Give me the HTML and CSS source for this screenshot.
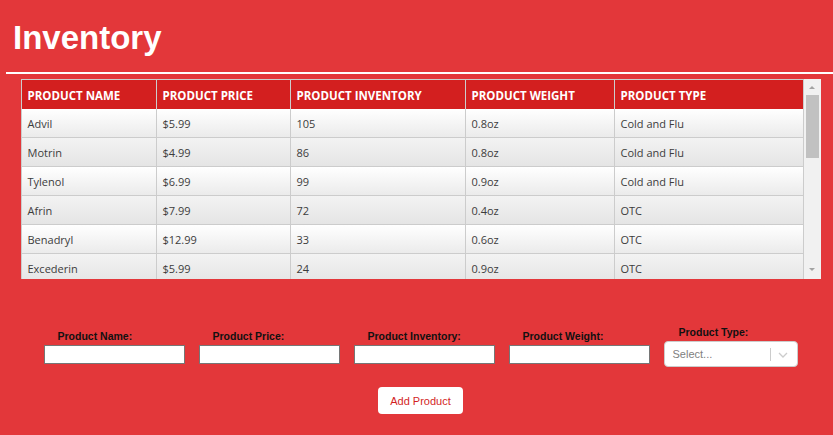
FILE: index.html
```html
<!DOCTYPE html>
<html lang="en">
<head>
<meta charset="utf-8">
<title>Inventory</title>
<link rel="stylesheet" href="styles.css">
</head>
<body>
  <header class="page-header">
    <h1 class="title">Inventory</h1>
  </header>
  <hr class="rule">
  <main class="main">
    <div class="grid-wrap">
      <div class="grid">
        <div class="row head">
          <div class="cell">PRODUCT NAME</div>
          <div class="cell">PRODUCT PRICE</div>
          <div class="cell">PRODUCT INVENTORY</div>
          <div class="cell">PRODUCT WEIGHT</div>
          <div class="cell">PRODUCT TYPE</div>
        </div>
        <div class="row odd">
          <div class="cell">Advil</div><div class="cell">$5.99</div><div class="cell">105</div><div class="cell">0.8oz</div><div class="cell">Cold and Flu</div>
        </div>
        <div class="row even">
          <div class="cell">Motrin</div><div class="cell">$4.99</div><div class="cell">86</div><div class="cell">0.8oz</div><div class="cell">Cold and Flu</div>
        </div>
        <div class="row odd">
          <div class="cell">Tylenol</div><div class="cell">$6.99</div><div class="cell">99</div><div class="cell">0.9oz</div><div class="cell">Cold and Flu</div>
        </div>
        <div class="row even">
          <div class="cell">Afrin</div><div class="cell">$7.99</div><div class="cell">72</div><div class="cell">0.4oz</div><div class="cell">OTC</div>
        </div>
        <div class="row odd">
          <div class="cell">Benadryl</div><div class="cell">$12.99</div><div class="cell">33</div><div class="cell">0.6oz</div><div class="cell">OTC</div>
        </div>
        <div class="row even">
          <div class="cell">Excederin</div><div class="cell">$5.99</div><div class="cell">24</div><div class="cell">0.9oz</div><div class="cell">OTC</div>
        </div>
      </div>
      <div class="scrollbar">
        <span class="arrow up"></span>
        <span class="thumb"></span>
        <span class="track-fill"></span>
        <span class="arrow down"></span>
      </div>
    </div>

    <form class="form">
      <div class="fields">
        <div class="field">
          <label class="label">Product Name:</label>
          <input class="input" type="text">
        </div>
        <div class="field">
          <label class="label">Product Price:</label>
          <input class="input" type="text">
        </div>
        <div class="field">
          <label class="label">Product Inventory:</label>
          <input class="input" type="text">
        </div>
        <div class="field">
          <label class="label">Product Weight:</label>
          <input class="input" type="text">
        </div>
        <div class="field">
          <label class="label">Product Type:</label>
          <div class="select">
            <span class="placeholder">Select...</span>
            <span class="sep"></span>
            <svg class="chev" width="10" height="6" viewBox="0 0 10 6"><path d="M1 1 L5 5 L9 1" fill="none" stroke="#cccccc" stroke-width="1.3"/></svg>
          </div>
        </div>
      </div>
      <button class="btn" type="button">Add Product</button>
    </form>
  </main>
</body>
</html>
```

FILE: styles.css
```css
* { box-sizing: border-box; }

html, body {
  margin: 0;
  padding: 0;
  background: #e3373a;
  height: 100%;
}

body {
  font-family: "Liberation Sans", Arial, sans-serif;
  overflow: hidden;
}

.page-header {
  padding: 21px 0 0 13px;
}

.title {
  margin: 0;
  font-family: "Liberation Sans", Arial, sans-serif;
  font-weight: bold;
  font-size: 33px;
  line-height: 33px;
  color: #ffffff;
}

.rule {
  margin: 18px 0 0 6px;
  border: 0;
  height: 2px;
  background: #ffffff;
}

.main {
  padding-left: 8px;
  display: flex;
  flex-direction: column;
  align-items: center;
}

.grid-wrap {
  margin-top: 5px;
  width: 800px;
  height: 200px;
  display: flex;
  overflow: hidden;
}

.grid {
  width: 783px;
  height: 200px;
  overflow: hidden;
  border-left: 1px solid #cccccc;
  border-top: 1px solid #cccccc;
  font-family: "Open Sans", "Noto Sans", sans-serif;
}

.row {
  display: grid;
  grid-template-columns: 135px 134px 175px 149px 189px;
  height: 29px;
  border-bottom: 1px solid #cccccc;
}

.row.head {
  background: #d31f1f;
  border-bottom: 0;
}

.row.odd { background: linear-gradient(to bottom, #ffffff, #ebebeb); }
.row.even { background: linear-gradient(to bottom, #f3f3f3, #e5e5e5); }

.cell {
  border-right: 1px solid #cccccc;
  padding-left: 6px;
  display: flex;
  align-items: center;
  font-size: 11px;
  color: #3c3c3c;
  white-space: nowrap;
}

.head .cell {
  color: #ffffff;
  font-weight: 700;
  font-size: 11.5px;
  padding-top: 1px;
}

.scrollbar {
  width: 17px;
  height: 200px;
  background: #f1f1f1;
  display: flex;
  flex-direction: column;
  align-items: center;
}

.arrow {
  width: 0;
  height: 0;
  border-left: 3.5px solid transparent;
  border-right: 3.5px solid transparent;
}

.arrow.up {
  margin-top: 7px;
  border-bottom: 3.5px solid #a3a3a3;
}

.thumb {
  margin-top: 6px;
  width: 13px;
  height: 63px;
  background: #c1c1c1;
}

.track-fill { flex: 1; }

.arrow.down {
  margin-bottom: 8px;
  border-top: 3.5px solid #a3a3a3;
}

.form {
  display: flex;
  flex-direction: column;
  align-items: center;
}

.fields {
  margin-top: 47px;
  display: flex;
  align-items: center;
  gap: 14px;
}

.field {
  display: flex;
  flex-direction: column;
}

.label {
  font-size: 10.5px;
  line-height: 13px;
  font-weight: bold;
  color: #111111;
  padding-left: 14px;
  margin-bottom: 2px;
}

.field:last-child .label {
  padding-left: 15px;
  margin-bottom: 2px;
}

.input {
  width: 141px;
  height: 19px;
  margin: 0;
  border: 1px solid #767676;
  background: #ffffff;
  padding: 0 3px;
  font-size: 11px;
}

.select {
  width: 134px;
  height: 26px;
  background: #ffffff;
  border: 1px solid #cccccc;
  border-radius: 4px;
  display: flex;
  align-items: center;
  padding-left: 8px;
}

.placeholder {
  flex: 1;
  font-size: 11px;
  color: #808080;
}

.sep {
  width: 1px;
  height: 13px;
  background: #cccccc;
}

.chev {
  margin: 1px 9px 0 7px;
}

.btn {
  margin-top: 20px;
  width: 85px;
  height: 27px;
  background: #ffffff;
  border: 0;
  border-radius: 4px;
  font-family: "Liberation Sans", Arial, sans-serif;
  font-size: 11px;
  color: #d31f1f;
  padding: 0;
}
```
